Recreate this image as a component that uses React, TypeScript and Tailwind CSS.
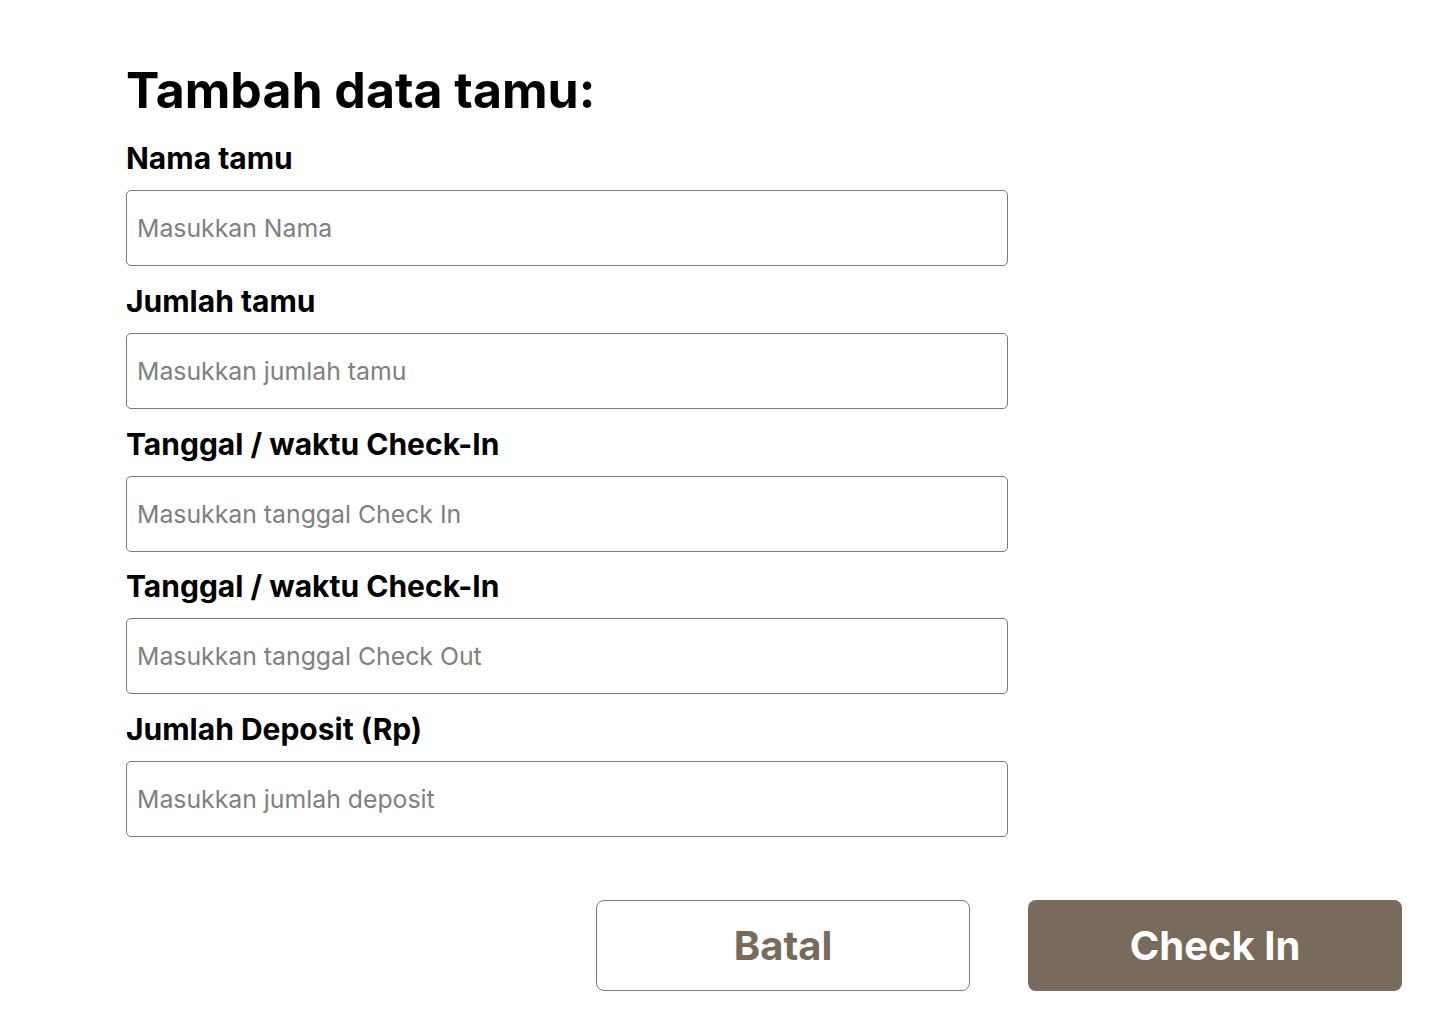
import React from "react";

const fields = [
  { label: "Nama tamu", placeholder: "Masukkan Nama" },
  { label: "Jumlah tamu", placeholder: "Masukkan jumlah tamu" },
  { label: "Tanggal / waktu Check-In", placeholder: "Masukkan tanggal Check In" },
  { label: "Tanggal / waktu Check-In", placeholder: "Masukkan tanggal Check Out" },
  { label: "Jumlah Deposit (Rp)", placeholder: "Masukkan jumlah deposit" },
];

export default function App() {
  return (
    <div
      className="min-h-[1024px] w-[1440px] bg-white pl-[126px] pt-[60px]"
      style={{ fontFamily: "Inter, 'Noto Sans', sans-serif" }}
    >
      <h1 className="text-[50px] font-bold leading-[60px] text-black">Tambah data tamu:</h1>
      <div className="mt-[21px] flex w-[882px] flex-col gap-[17.8px]">
        {fields.map((f, i) => (
          <div key={i} className="flex flex-col">
            <label className="text-[30px] font-bold leading-[34px] text-black">{f.label}</label>
            <input
              className="mt-[15px] h-[76px] w-[882px] rounded-[5px] border border-[#7a7a7a] px-[10px] text-[24.8px] text-black outline-none placeholder:text-[#808080]"
              placeholder={f.placeholder}
            />
          </div>
        ))}
      </div>
      <div className="mt-[63px] flex gap-[58px] pl-[470px]">
        <button className="h-[91px] w-[374px] rounded-[8px] border border-[#7a7a7a] bg-white text-[40px] font-bold text-[#786b5c]">
          Batal
        </button>
        <button className="h-[91px] w-[374px] rounded-[8px] bg-[#786b5c] text-[40px] font-bold text-white">
          Check In
        </button>
      </div>
    </div>
  );
}
